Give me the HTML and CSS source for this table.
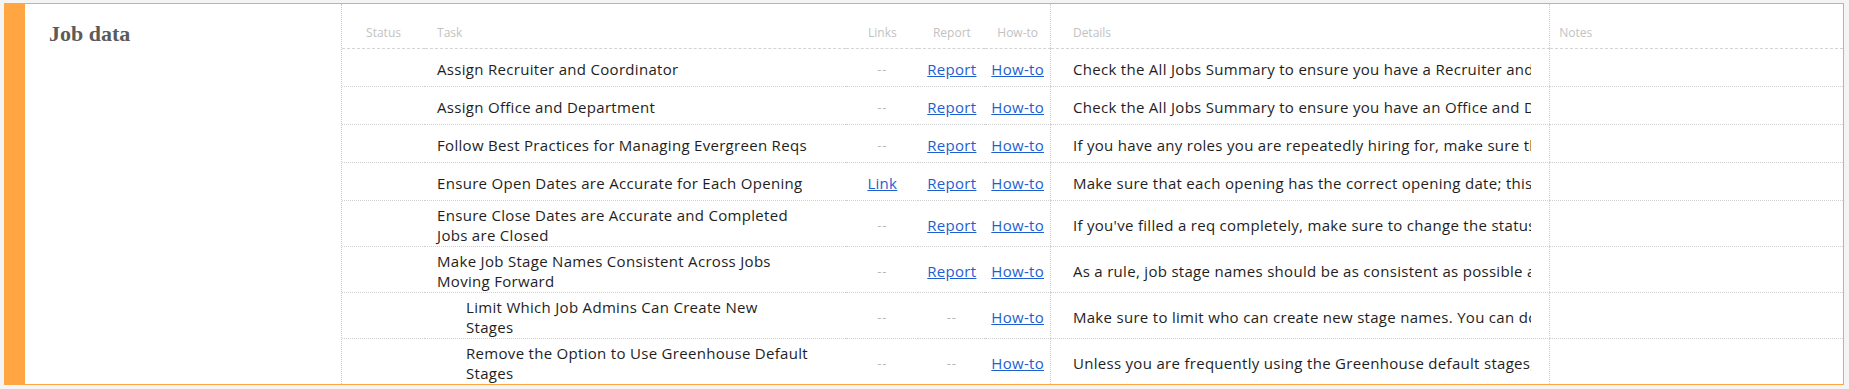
FILE: index.html
```html
<!DOCTYPE html>
<html lang="en">
<head>
    <meta charset="UTF-8">
    <meta name="viewport" content="width=device-width, initial-scale=1.0">
    <title>Job data checklist</title>
    <link rel="stylesheet" href="styles.css">
</head>
<body>

<!-- Categoría: Job data -->
<section class="category">
    <div class="category-title">
        <h2>Job data</h2>
    </div>

    <div class="table-wrap">
        <table class="task-table">
            <colgroup>
                <col class="col-status">
                <col class="col-task">
                <col class="col-links">
                <col class="col-report">
                <col class="col-howto">
                <col class="col-details">
                <col class="col-notes">
            </colgroup>
            <thead>
                <tr>
                    <th>Status</th>
                    <th class="task">Task</th>
                    <th>Links</th>
                    <th>Report</th>
                    <th>How-to</th>
                    <th class="details">Details</th>
                    <th class="notes">Notes</th>
                </tr>
            </thead>
            <tbody>
                <tr>
                    <td></td>
                    <td class="task">Assign Recruiter and Coordinator</td>
                    <td class="empty">--</td>
                    <td><a href="#">Report</a></td>
                    <td><a href="#">How-to</a></td>
                    <td class="details"><div class="clip">Check the All Jobs Summary to ensure you have a Recruiter and Coordinator assigned to every open job.</div></td>
                    <td class="notes"></td>
                </tr>
                <tr>
                    <td></td>
                    <td class="task">Assign Office and Department</td>
                    <td class="empty">--</td>
                    <td><a href="#">Report</a></td>
                    <td><a href="#">How-to</a></td>
                    <td class="details"><div class="clip">Check the All Jobs Summary to ensure you have an Office and Department assigned to every open job.</div></td>
                    <td class="notes"></td>
                </tr>
                <tr>
                    <td></td>
                    <td class="task">Follow Best Practices for Managing Evergreen Reqs</td>
                    <td class="empty">--</td>
                    <td><a href="#">Report</a></td>
                    <td><a href="#">How-to</a></td>
                    <td class="details"><div class="clip">If you have any roles you are repeatedly hiring for, make sure they are set up as evergreen reqs.</div></td>
                    <td class="notes"></td>
                </tr>
                <tr>
                    <td></td>
                    <td class="task">Ensure Open Dates are Accurate for Each Opening</td>
                    <td><a href="#">Link</a></td>
                    <td><a href="#">Report</a></td>
                    <td><a href="#">How-to</a></td>
                    <td class="details"><div class="clip">Make sure that each opening has the correct opening date; this drives your reporting.</div></td>
                    <td class="notes"></td>
                </tr>
                <tr>
                    <td></td>
                    <td class="task">Ensure Close Dates are Accurate and Completed<br>Jobs are Closed</td>
                    <td class="empty">--</td>
                    <td><a href="#">Report</a></td>
                    <td><a href="#">How-to</a></td>
                    <td class="details"><div class="clip">If you've filled a req completely, make sure to change the status of the job to closed.</div></td>
                    <td class="notes"></td>
                </tr>
                <tr>
                    <td></td>
                    <td class="task">Make Job Stage Names Consistent Across Jobs<br>Moving Forward</td>
                    <td class="empty">--</td>
                    <td><a href="#">Report</a></td>
                    <td><a href="#">How-to</a></td>
                    <td class="details"><div class="clip">As a rule, job stage names should be as consistent as possible across all of your jobs.</div></td>
                    <td class="notes"></td>
                </tr>
                <tr>
                    <td></td>
                    <td class="task sub">Limit Which Job Admins Can Create New<br>Stages</td>
                    <td class="empty">--</td>
                    <td class="empty">--</td>
                    <td><a href="#">How-to</a></td>
                    <td class="details"><div class="clip">Make sure to limit who can create new stage names. You can do this in user permissions.</div></td>
                    <td class="notes"></td>
                </tr>
                <tr>
                    <td></td>
                    <td class="task sub">Remove the Option to Use Greenhouse Default<br>Stages</td>
                    <td class="empty">--</td>
                    <td class="empty">--</td>
                    <td><a href="#">How-to</a></td>
                    <td class="details"><div class="clip">Unless you are frequently using the Greenhouse default stages, remove them as an option.</div></td>
                    <td class="notes"></td>
                </tr>
            </tbody>
        </table>
    </div>
</section>

</body>
</html>
```

FILE: styles.css
```css
body {
    font-family: "Open Sans", "Noto Sans", sans-serif;
    background: #f4f4f4;
    color: #1e1e1e;
    margin: 0;
    padding: 3px 5px 3px 4px;
}

/* Tarjeta de la categoría */
.category {
    display: flex;
    background: #fff;
    border: 1px solid #ffa541;
    border-left: 21px solid #ffa541;
}

.category-title {
    width: 317px;
    flex-shrink: 0;
    border-right: 1px dotted #c8c8c8;
    padding: 17px 24px;
    box-sizing: border-box;
}

.category-title h2 {
    margin: 0;
    font-family: "Liberation Serif", "DejaVu Serif", serif;
    font-weight: bold;
    font-size: 22px;
    color: #5b5b5b;
}

/* Tabla de tareas */
.table-wrap {
    flex: 1;
    min-width: 0;
}

.task-table {
    width: 100%;
    border-collapse: collapse;
    table-layout: fixed;
    font-size: 15px;
    letter-spacing: 0.3px;
}

.col-status { width: 83px; }
.col-task { width: 421px; }
.col-links { width: 72px; }
.col-report { width: 67px; }
.col-howto { width: 65px; }
.col-details { width: 499px; }
.col-notes { width: 293px; }

.task-table th {
    height: 37px;
    vertical-align: bottom;
    padding: 0 0 7px;
    font-size: 12px;
    font-weight: normal;
    letter-spacing: 0;
    color: #c2c2c2;
    text-align: center;
    border-bottom: 1px dashed #d4d4d4;
}

.task-table td {
    height: 31px;
    padding: 5px 0 1px;
    text-align: center;
    line-height: 19.5px;
    border-bottom: 1px dotted #d0d0d0;
}

.task-table tr:last-child td {
    border-bottom: none;
}

.task-table .task {
    text-align: left;
    padding-left: 12px;
    padding-right: 10px;
}

.task-table .task.sub {
    padding-left: 41px;
}

.task-table .details {
    text-align: left;
    padding-left: 22px;
    padding-right: 18px;
    border-left: 1px dotted #d0d0d0;
}

.task-table .details .clip {
    white-space: nowrap;
    overflow: hidden;
}

.task-table .notes {
    text-align: left;
    padding-left: 9px;
    border-left: 1px dotted #d0d0d0;
}

.task-table .empty {
    color: #b8b8b8;
    font-size: 13px;
    letter-spacing: 1px;
}

.task-table a {
    color: #1d5fd1;
    text-decoration: underline;
}
```
